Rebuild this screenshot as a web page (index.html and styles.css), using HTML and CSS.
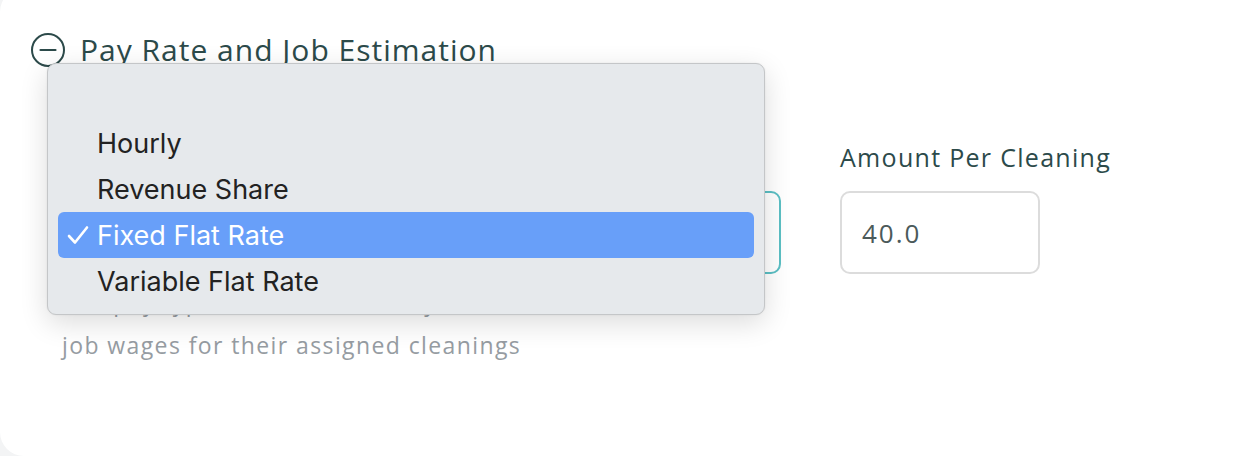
FILE: index.html
```html
<!DOCTYPE html>
<html lang="en">
<head>
<meta charset="utf-8">
<title>Pay Rate and Job Estimation</title>
<link rel="stylesheet" href="styles.css">
</head>
<body>
<div class="card">
  <div class="section-header">
    <svg class="collapse-icon" width="36" height="36" viewBox="0 0 36 36" aria-hidden="true">
      <circle cx="18" cy="18" r="16" fill="none" stroke="#2c4a4a" stroke-width="2"/>
      <line x1="10.5" y1="18" x2="25.5" y2="18" stroke="#2c4a4a" stroke-width="2.2" stroke-linecap="round"/>
    </svg>
    <h2 class="section-title">Pay Rate and Job Estimation</h2>
  </div>
  <div class="fields">
    <div class="field field-type">
      <div class="field-label">Pay Type</div>
      <div class="select-box">Fixed Flat Rate</div>
      <div class="help">The pay type determines how your cleaners earn<br>job wages for their assigned cleanings</div>
    </div>
    <div class="field field-amount">
      <div class="field-label">Amount Per Cleaning</div>
      <div class="input-box">40.0</div>
    </div>
  </div>

  <div class="dropdown">
    <div class="option empty"></div>
    <div class="option"><span class="check"></span>Hourly</div>
    <div class="option"><span class="check"></span>Revenue Share</div>
    <div class="option selected"><span class="check"><svg width="22" height="20" viewBox="0 0 22 20" aria-hidden="true"><polyline points="2,11 8,17.5 20,2.5" fill="none" stroke="#ffffff" stroke-width="2.6" stroke-linecap="round" stroke-linejoin="round"/></svg></span>Fixed Flat Rate</div>
    <div class="option"><span class="check"></span>Variable Flat Rate</div>
  </div>
</div>
</body>
</html>
```
FILE: styles.css
```css
html, body {
  margin: 0;
  padding: 0;
}
body {
  background: #f3f4f5;
  width: 1242px;
  height: 456px;
  overflow: hidden;
  font-family: "Open Sans", "Lato", sans-serif;
}
.card {
  position: relative;
  background: #ffffff;
  margin-top: -12px;
  height: 468px;
  border-radius: 24px 0 0 24px;
  box-sizing: border-box;
  padding: 44px 0 0 30px;
}
.section-header {
  display: flex;
  align-items: center;
  gap: 14px;
  height: 36px;
}
.collapse-icon {
  display: block;
  flex: none;
}
.section-title {
  margin: 0;
  font-size: 30px;
  letter-spacing: 1px;
  font-weight: 400;
  color: #2c4a4a;
  line-height: 36px;
  white-space: nowrap;
}
.fields {
  display: grid;
  grid-template-columns: 719px 200px;
  column-gap: 59px;
  margin-top: 74px;
  padding-left: 32px;
}
.field-label {
  font-size: 25px;
  letter-spacing: 1.3px;
  color: #2c4a4a;
  line-height: 30px;
  height: 30px;
  white-space: nowrap;
}
.select-box,
.input-box {
  margin-top: 19px;
  height: 83px;
  box-sizing: border-box;
  border-radius: 10px;
  display: flex;
  align-items: center;
  padding-left: 20px;
  font-size: 26px;
  letter-spacing: 2px;
  color: #4b5a5a;
}
.select-box {
  border: 2px solid #5bbfc4;
}
.input-box {
  border: 2px solid #dcdcdc;
}
.help {
  margin-top: 7px;
  font-size: 23px;
  letter-spacing: 1.4px;
  line-height: 43px;
  color: #969ca2;
  white-space: nowrap;
}
.dropdown {
  position: absolute;
  left: 47px;
  top: 75px;
  width: 718px;
  height: 252px;
  box-sizing: border-box;
  padding: 10px 10px;
  background: #e6e9ec;
  border: 1px solid #c4c6c8;
  border-radius: 9px;
  box-shadow: 0 8px 28px rgba(0, 0, 0, 0.14), 0 0 2px rgba(0, 0, 0, 0.08);
  font-family: "Inter", "Roboto", sans-serif;
}
.option {
  height: 46px;
  display: flex;
  align-items: center;
  font-size: 27px;
  color: #222222;
  border-radius: 6px;
}
.option .check {
  width: 39px;
  height: 20px;
  flex: none;
  display: flex;
  align-items: center;
  padding-left: 9px;
  box-sizing: border-box;
}
.option .check svg {
  display: block;
}
.option.selected {
  background: #689ff9;
  color: #ffffff;
}
```
